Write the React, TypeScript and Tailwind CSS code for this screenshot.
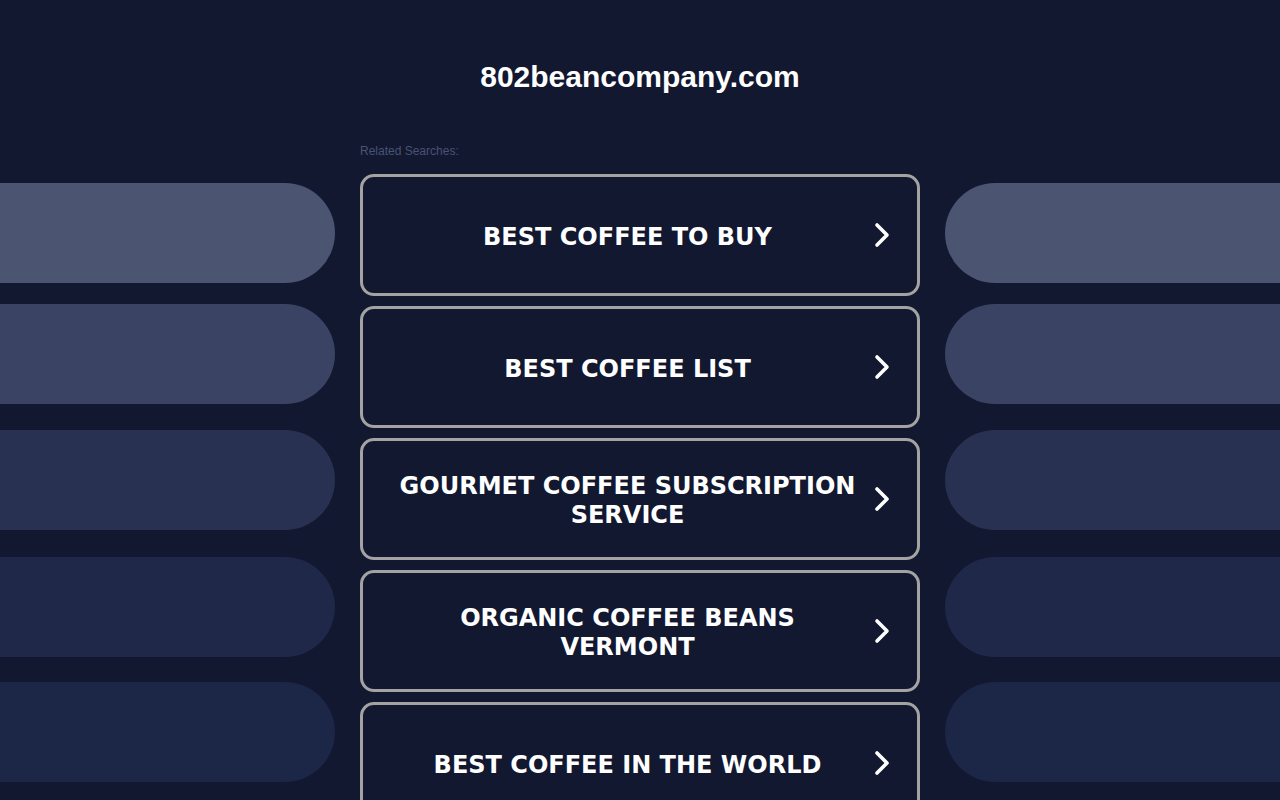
import React from "react";

const items = [
  "BEST COFFEE TO BUY",
  "BEST COFFEE LIST",
  "GOURMET COFFEE SUBSCRIPTION SERVICE",
  "ORGANIC COFFEE BEANS VERMONT",
  "BEST COFFEE IN THE WORLD",
];

function Chevron() {
  return (
    <svg width="18" height="26" viewBox="0 0 18 26" fill="none">
      <path d="M4 3 L14 13 L4 23" stroke="white" strokeWidth="3.6" strokeLinecap="round" strokeLinejoin="round" />
    </svg>
  );
}

function Pills({ side }: { side: "left" | "right" }) {
  const r = side === "left" ? "rounded-r-[50px]" : "rounded-l-[50px]";
  return (
    <div className="flex flex-col pt-[183px]">
      <div className={`h-[100px] bg-[#4b5572] ${r}`} />
      <div className={`h-[100px] mt-[21px] bg-[#3a4363] ${r}`} />
      <div className={`h-[100px] mt-[26px] bg-[#283152] ${r}`} />
      <div className={`h-[100px] mt-[27px] bg-[#1f2848] ${r}`} />
      <div className={`h-[100px] mt-[25px] bg-[#1c2647] ${r}`} />
    </div>
  );
}

export default function App() {
  return (
    <div className="w-[1280px] h-[800px] overflow-hidden bg-[#111830] flex" style={{ fontFamily: "'Liberation Sans', Arial, sans-serif" }}>
      <div className="w-[335px] shrink-0">
        <Pills side="left" />
      </div>
      <div className="w-[560px] shrink-0 ml-[25px] mr-[25px] flex flex-col">
        <h1 className="mt-[59px] h-[36px] leading-[36px] text-center text-white font-bold text-[30px]">802beancompany.com</h1>
        <div className="mt-[48px] h-[16px] leading-[16px] text-[12px] text-[#4a5375]">Related Searches:</div>
        <div className="mt-[15px] flex flex-col gap-[10px]">
          {items.map((t) => (
            <div key={t} className="h-[122px] shrink-0 border-[3px] border-[#a3a3a3] rounded-[14px] flex items-center pl-[30px] pr-[15px]">
              <div className="flex-1 pt-[4px] text-center text-white font-bold text-[24px] leading-[29px]" style={{ fontFamily: "'DejaVu Sans', Verdana, sans-serif" }}>
                {t}
              </div>
              <div className="w-[40px] flex justify-center">
                <Chevron />
              </div>
            </div>
          ))}
        </div>
      </div>
      <div className="flex-1">
        <Pills side="right" />
      </div>
    </div>
  );
}
